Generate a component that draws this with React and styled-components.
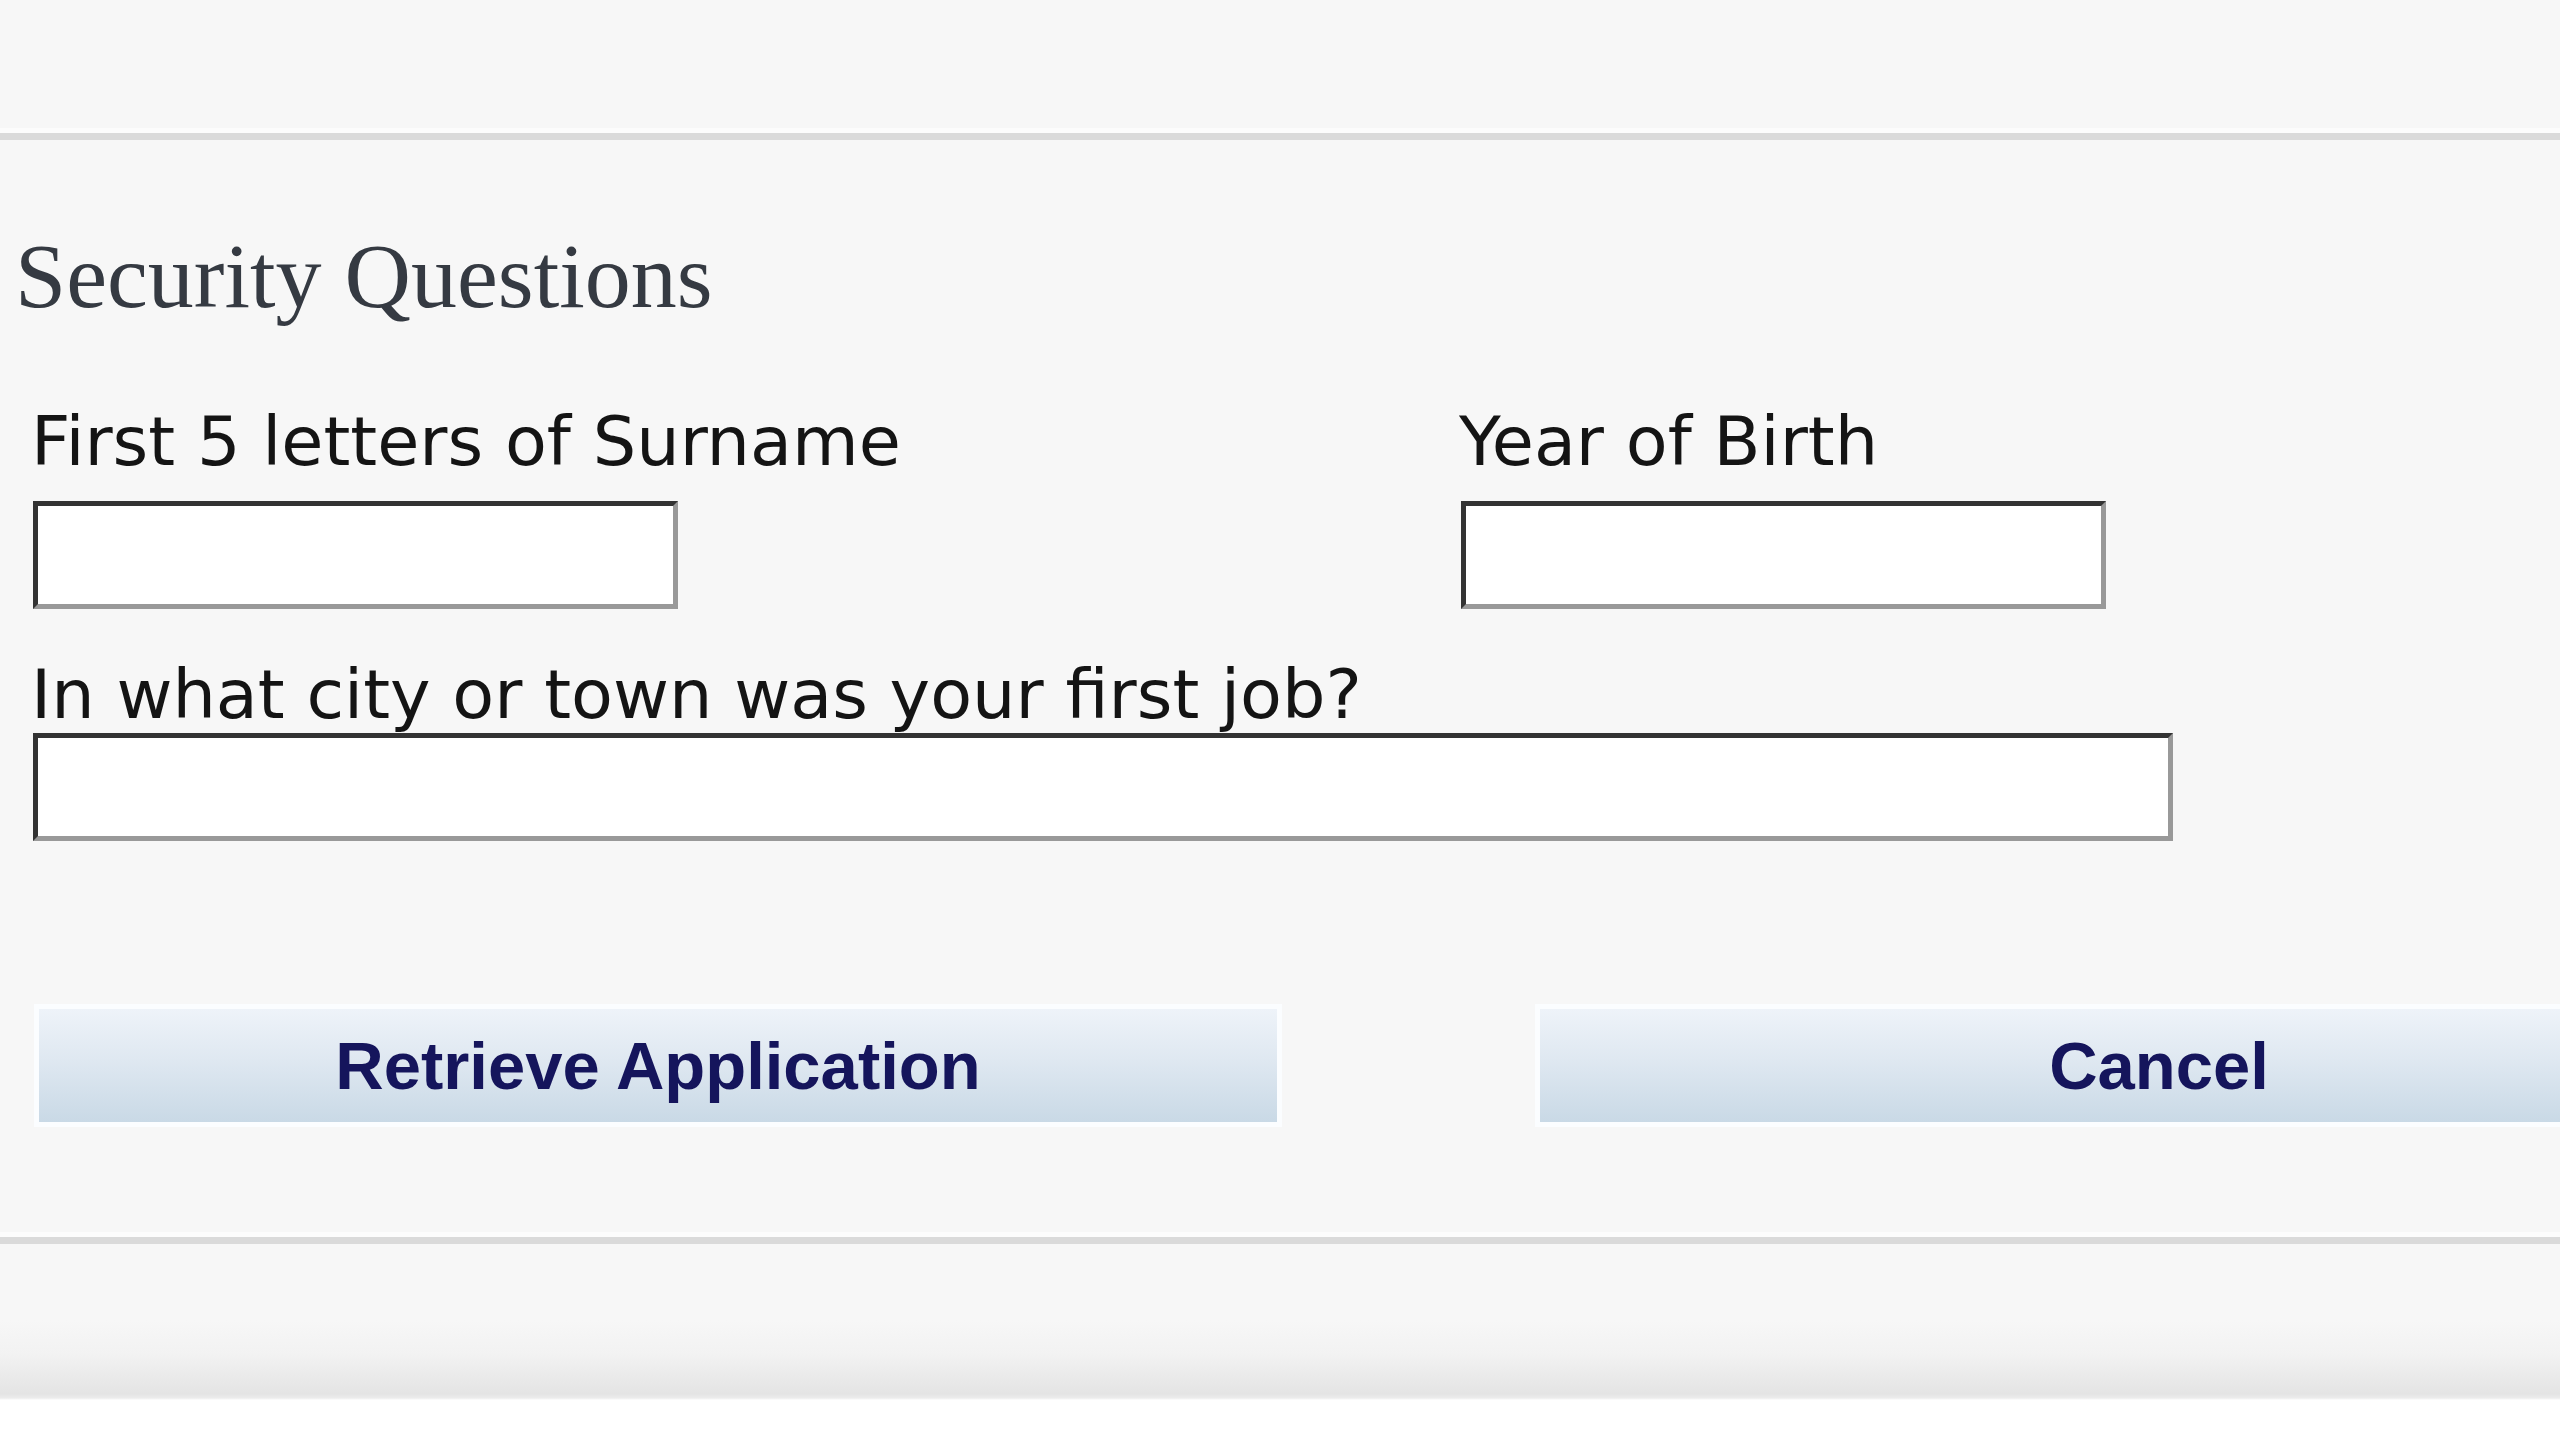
import React from 'react'
import styled, { createGlobalStyle } from 'styled-components'

const GlobalStyle = createGlobalStyle`
    html, body {
        margin: 0;
        padding: 0;
        background: #f7f7f7;
        overflow: hidden;
    }
`

function Field(props) {
    return (
        <FieldBox>
            <Label>{props.label}</Label>
            <Input type="text" width={props.width} />
        </FieldBox>
    )
}

export default function App() {
    return (
        <Page>
            <GlobalStyle />
            <Divider />
            <Content>
                <Title>Security Questions</Title>
                <FieldRow>
                    <Field label="First 5 letters of Surname" width={645} />
                    <Field label="Year of Birth" width={645} />
                </FieldRow>
                <WideField>
                    <Label tight>In what city or town was your first job?</Label>
                    <Input type="text" width={2140} />
                </WideField>
                <ButtonRow>
                    <ActionButton>Retrieve Application</ActionButton>
                    <ActionButton>Cancel</ActionButton>
                </ButtonRow>
            </Content>
            <Divider />
            <Footer />
        </Page>
    )
}

const Page = styled.div`
    width: 2560px;
    height: 1440px;
    overflow: hidden;
    background: #f7f7f7;
    padding-top: 128px;
    box-sizing: border-box;
    display: flex;
    flex-direction: column;
`

const Divider = styled.div`
    flex: none;
    height: 7px;
    background: #dadada;
    border-top: 5px solid #fcfcfc;
`

const Content = styled.div`
    display: flex;
    flex-direction: column;
    padding: 90px 0 105px 0;
`

const Title = styled.h1`
    margin: 0 0 0 15px;
    font-family: "Liberation Serif", "Times New Roman", serif;
    font-weight: normal;
    font-size: 92px;
    line-height: 92px;
    color: #353a42;
`

const FieldRow = styled.div`
    display: grid;
    grid-template-columns: 1428px auto;
    padding-left: 33px;
    margin-top: 85px;
`

const FieldBox = styled.div`
    display: flex;
    flex-direction: column;
    align-items: flex-start;
`

const WideField = styled(FieldBox)`
    padding-left: 33px;
    margin-top: 51px;
`

const Label = styled.label`
    font-family: "DejaVu Sans", Verdana, sans-serif;
    font-size: 68.5px;
    line-height: 68px;
    color: #141414;
    margin-left: -2px;
    margin-bottom: ${props => (props.tight ? '5px' : '26px')};
    white-space: nowrap;
`

const Input = styled.input`
    box-sizing: border-box;
    width: ${props => props.width}px;
    height: 108px;
    margin: 0;
    padding: 0 10px;
    background: #ffffff;
    border-style: solid;
    border-width: 5px;
    border-color: #333333 #999999 #999999 #333333;
    outline: none;
    font-size: 60px;
`

const ButtonRow = styled.div`
    display: flex;
    gap: 253px;
    padding-left: 34px;
    margin-top: 163px;
`

const ActionButton = styled.button`
    flex: none;
    box-sizing: border-box;
    width: 1248px;
    height: 123px;
    border: 5px solid #fbfdff;
    background: linear-gradient(to bottom, #eef3f9 0%, #dfe8f1 45%, #c9d9e6 100%);
    font-family: "Liberation Sans", Arial, sans-serif;
    font-weight: bold;
    font-size: 67px;
    color: #15155c;
    padding: 0;
    cursor: pointer;
`

const Footer = styled.div`
    flex: none;
    height: 200px;
    background: linear-gradient(
        to bottom,
        #f7f7f7 0px,
        #f7f7f7 76px,
        #f2f2f2 110px,
        #e4e4e4 150px,
        #ececec 154px,
        #ffffff 156px,
        #ffffff 100%
    );
`
